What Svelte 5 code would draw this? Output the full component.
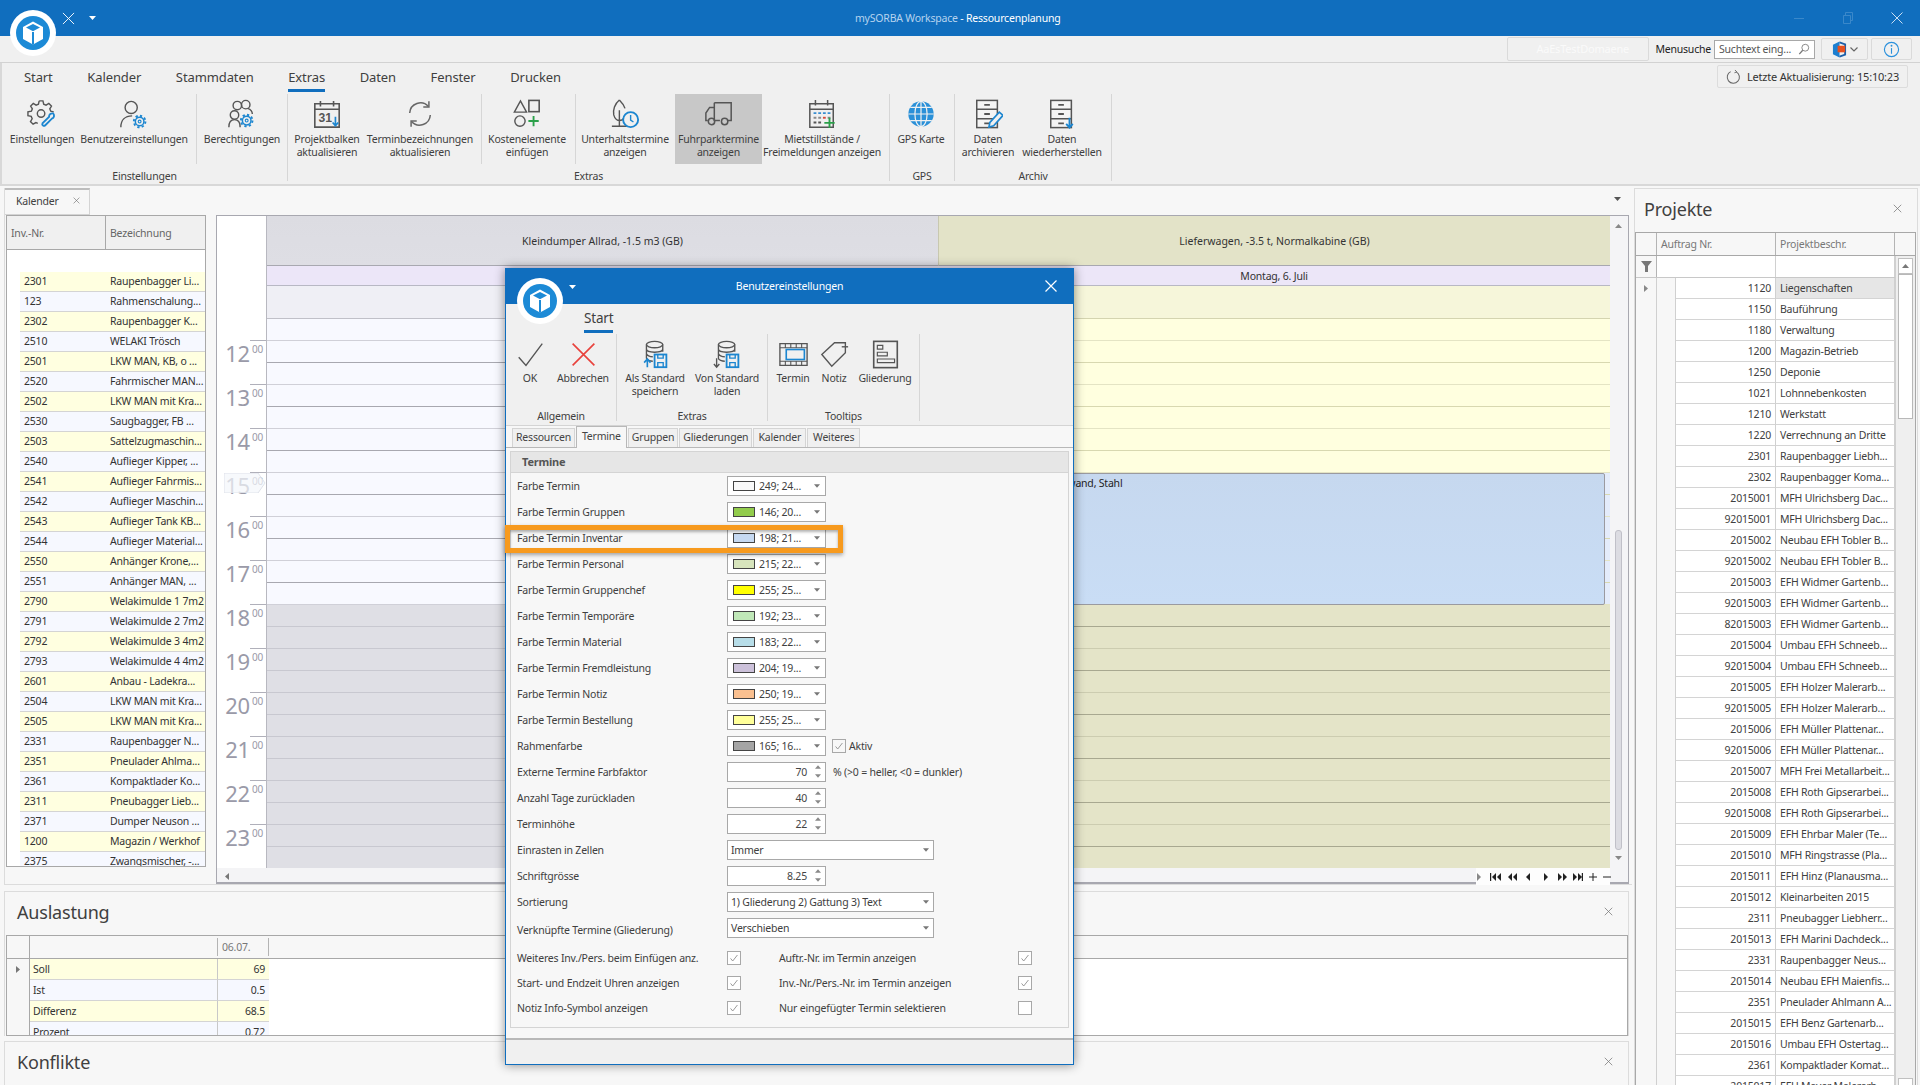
<script>
  const tabs = ["Start", "Kalender", "Stammdaten", "Extras", "Daten", "Fenster", "Drucken"];

  const invRows = [
    ["2301", "Raupenbagger Li..."], ["123", "Rahmenschalung..."], ["2302", "Raupenbagger K..."],
    ["2510", "WELAKI Trösch"], ["2501", "LKW MAN, KB, o ..."], ["2520", "Fahrmischer MAN..."],
    ["2502", "LKW MAN mit Kra..."], ["2530", "Saugbagger, FB ..."], ["2503", "Sattelzugmaschin..."],
    ["2540", "Auflieger Kipper, ..."], ["2541", "Auflieger Fahrmis..."], ["2542", "Auflieger Maschin..."],
    ["2543", "Auflieger Tank KB..."], ["2544", "Auflieger Material..."], ["2550", "Anhänger Krone,..."],
    ["2551", "Anhänger MAN, ..."], ["2790", "Welakimulde 1 7m2"], ["2791", "Welakimulde 2 7m2"],
    ["2792", "Welakimulde 3 4m2"], ["2793", "Welakimulde 4 4m2"], ["2601", "Anbau - Ladekra..."],
    ["2504", "LKW MAN mit Kra..."], ["2505", "LKW MAN mit Kra..."], ["2331", "Raupenbagger N..."],
    ["2351", "Pneulader Ahlma..."], ["2361", "Kompaktlader Ko..."], ["2311", "Pneubagger Lieb..."],
    ["2371", "Dumper Neuson ..."], ["1200", "Magazin / Werkhof"], ["2375", "Zwangsmischer, -..."]
  ];

  const projects = [
    ["1120", "Liegenschaften"], ["1150", "Bauführung"], ["1180", "Verwaltung"], ["1200", "Magazin-Betrieb"],
    ["1250", "Deponie"], ["1021", "Lohnnebenkosten"], ["1210", "Werkstatt"], ["1220", "Verrechnung an Dritte"],
    ["2301", "Raupenbagger Liebh..."], ["2302", "Raupenbagger Koma..."], ["2015001", "MFH Ulrichsberg Dac..."],
    ["92015001", "MFH Ulrichsberg Dac..."], ["2015002", "Neubau EFH Tobler B..."], ["92015002", "Neubau EFH Tobler B..."],
    ["2015003", "EFH Widmer Gartenb..."], ["92015003", "EFH Widmer Gartenb..."], ["82015003", "EFH Widmer Gartenb..."],
    ["2015004", "Umbau EFH Schneeb..."], ["92015004", "Umbau EFH Schneeb..."], ["2015005", "EFH Holzer Malerarb..."],
    ["92015005", "EFH Holzer Malerarb..."], ["2015006", "EFH Müller Plattenar..."], ["92015006", "EFH Müller Plattenar..."],
    ["2015007", "MFH Frei Metallarbeit..."], ["2015008", "EFH Roth Gipserarbei..."], ["92015008", "EFH Roth Gipserarbei..."],
    ["2015009", "EFH Ehrbar Maler (Te..."], ["2015010", "MFH Ringstrasse (Pla..."], ["2015011", "EFH Hinz (Planausma..."],
    ["2015012", "Kleinarbeiten 2015"], ["2311", "Pneubagger Liebherr..."], ["2015013", "EFH Marini Dachdeck..."],
    ["2331", "Raupenbagger Neus..."], ["2015014", "Neubau EFH Maienfis..."], ["2351", "Pneulader Ahlmann A..."],
    ["2015015", "EFH Benz Gartenarb..."], ["2015016", "Umbau EFH Ostertag..."], ["2361", "Kompaktlader Komat..."],
    ["2015017", "EFH Mayer Malerarb..."]
  ];

  const hours = [12, 13, 14, 15, 16, 17, 18, 19, 20, 21, 22, 23];
  // half hour slots from 11:30 to 24:00
  const slots = Array.from({ length: 25 }, (_, i) => i);

  const colorRows = [
    ["Farbe Termin", "#f9f9f9", "249; 24..."],
    ["Farbe Termin Gruppen", "#92cc4c", "146; 20..."],
    ["Farbe Termin Inventar", "#c6d9f1", "198; 21..."],
    ["Farbe Termin Personal", "#d7e4bc", "215; 22..."],
    ["Farbe Termin Gruppenchef", "#ffff00", "255; 25..."],
    ["Farbe Termin Temporäre", "#c0e8b8", "192; 23..."],
    ["Farbe Termin Material", "#b7dde8", "183; 22..."],
    ["Farbe Termin Fremdleistung", "#ccc1da", "204; 19..."],
    ["Farbe Termin Notiz", "#fac090", "250; 19..."],
    ["Farbe Termin Bestellung", "#ffff99", "255; 25..."],
    ["Rahmenfarbe", "#a5a5a5", "165; 16..."]
  ];
  const spinRows1 = [
    ["Externe Termine Farbfaktor", "70"],
    ["Anzahl Tage zurückladen", "40"],
    ["Terminhöhe", "22"]
  ];
  const checks = [
    ["Weiteres Inv./Pers. beim Einfügen anz.", true, "Auftr.-Nr. im Termin anzeigen", true],
    ["Start- und Endzeit Uhren anzeigen", true, "Inv.-Nr./Pers.-Nr. im Termin anzeigen", true],
    ["Notiz Info-Symbol anzeigen", true, "Nur eingefügter Termin selektieren", false]
  ];
  const dlgTabs = ["Ressourcen", "Termine", "Gruppen", "Gliederungen", "Kalender", "Weiteres"];
</script>

{#snippet logo(cls)}
  <svg class={cls} viewBox="0 0 46 46">
    <circle cx="23" cy="23" r="23" fill="#fff" />
    <circle cx="23" cy="23" r="17" fill="#1c8ad6" />
    <path d="M23 11.5 33 17v12l-10 5.5L13 29V17z" fill="#fff" />
    <path d="M23 14l7 3.6-7 3.7-7-3.7z" fill="#1c8ad6" />
    <path d="M23 22v12.5" stroke="#1c8ad6" stroke-width="2" />
  </svg>
{/snippet}

{#snippet blueGear(x, y)}
  <g fill="none" stroke="#1c86d0">
    <circle cx={x} cy={y} r="6.2" stroke-width="2" stroke-dasharray="2.4 2.4" />
    <circle cx={x} cy={y} r="4.6" stroke-width="1.6" />
    <circle cx={x} cy={y} r="1.5" stroke-width="1.2" />
  </g>
{/snippet}

{#snippet cabinet()}
  <g fill="none" stroke="#555" stroke-width="1.6">
    <rect x="4" y="1.5" width="22" height="29" fill="#f4f4f4" />
    <path d="M4 11h22M4 21h22" />
    <path d="M12 6.2h6M12 16h6M12 26h6" stroke-width="2" />
  </g>
{/snippet}

{#snippet dbSave()}
  <g fill="none" stroke="#555" stroke-width="1.5">
    <ellipse cx="15" cy="5" rx="9" ry="3.5" />
    <path d="M6 5v15c0 2 4 3.4 7 3.4M24 5v8M6 10c0 2 4 3.5 9 3.5s9-1.500 9-3.500M6 15c0 2 4 3.500 7 3.500" />
  </g>
  <g fill="none" stroke="#1c86d0" stroke-width="2">
    <rect x="15" y="16" width="13" height="14" />
    <path d="M18.500 16v4h6v-4M18.500 30v-5h6v5" stroke-width="1.500" />
  </g>
{/snippet}

{#snippet xIcon(cls)}
  <svg class={cls} viewBox="0 0 12 12"><path d="M1 1l10 10M11 1L1 11" stroke="currentColor" stroke-width="1" fill="none" /></svg>
{/snippet}

{#snippet caret()}
  <svg class="caret" viewBox="0 0 7 4"><path d="M0 0h7L3.500 4z" /></svg>
{/snippet}

{#snippet spinner()}
  <span class="spin"><svg viewBox="0 0 7 4"><path d="M0 4h7L3.500 0z" /></svg><svg viewBox="0 0 7 4"><path d="M0 0h7L3.500 4z" /></svg></span>
{/snippet}

{#snippet check(on)}
  <span class="check">
    {#if on}<svg viewBox="0 0 14 14"><path d="M3 7.500l2.500 3L11 3.500" fill="none" stroke="#8a8a8a" stroke-width="1" /></svg>{/if}
  </span>
{/snippet}

<div class="app">
  <header class="titlebar">
    <svg class="qa-x" viewBox="0 0 14 14"><path d="M1 1l12 12M13 1L1 13" stroke="#fff" stroke-width="1" fill="none" /></svg>
    <svg class="qa-drop" viewBox="0 0 7 4"><path d="M0 0h7L3.500 4z" fill="#fff" /></svg>
    <div class="title"><span class="dim">mySORBA Workspace</span> - <span>Ressourcenplanung</span></div>
    <div class="winbtns">
      <svg viewBox="0 0 12 12" class="wb"><path d="M1 6.500h10" stroke="#3a88ca" fill="none" /></svg>
      <svg viewBox="0 0 12 12" class="wb"><path d="M1.500 3.500h7v8h-7zM3.500 3.500v-3h7v8h-2" stroke="#3a88ca" fill="none" /></svg>
      <svg viewBox="0 0 12 12" class="wb"><path d="M.5.500l11 11M11.500.500l-11 11" stroke="#c9def2" fill="none" /></svg>
    </div>
  </header>
  {@render logo("app-logo")}

  <div class="topstrip">
    <div class="domain">AaEsTestDomaene</div>
    <span class="menusearch-label">Menusuche</span>
    <div class="search">
      <span>Suchtext eing...</span>
      <svg viewBox="0 0 14 14"><circle cx="8.500" cy="5.500" r="4" fill="none" stroke="#777" /><path d="M5.500 8.500L1.500 13" stroke="#777" stroke-width="1.500" /></svg>
    </div>
    <div class="stripbtn office">
      <svg viewBox="0 0 16 18"><path d="M1 4l7-3.500V17.500L1 14z" fill="#1c7fd0" /><path d="M8 1.500l6 2v11l-6 2" fill="none" stroke="#1c5fa8" stroke-width="2" /><rect x="6" y="5" width="8" height="7" fill="#e8501e" /></svg>
      <svg class="chev" viewBox="0 0 8 5"><path d="M.5.500L4 4 7.500.500" fill="none" stroke="#666" stroke-width="1.200" /></svg>
    </div>
    <div class="stripbtn info">
      <svg viewBox="0 0 18 18"><circle cx="9" cy="9" r="7.500" fill="none" stroke="#2a90dc" stroke-width="1.200" /><path d="M9 7.500v6" stroke="#2a90dc" stroke-width="1.200" /><circle cx="9" cy="5" r="1" fill="#2a90dc" /></svg>
    </div>
  </div>

  <section class="ribbon">
    <nav class="rtabs">
      {#each tabs as t}
        <span class="rtab" class:active={t === "Extras"}>{t}</span>
      {/each}
    </nav>
    <div class="lastupdate">
      <svg viewBox="0 0 16 16"><path d="M11 2.500A6.500 6.500 0 1 1 5 2.300" fill="none" stroke="#666" stroke-width="1.100" /><path d="M9.500.500l2 2-2.500 1" fill="none" stroke="#666" stroke-width="1" /></svg>
      Letzte Aktualisierung: 15:10:23
    </div>
    <div class="groups">
      <div class="group" style="width:286px">
        <div class="items">
          <div class="item" style="width:74px;margin-left:3px">
            <svg viewBox="0 0 32 32">
              <path d="M13 2h4l.8 3.500 2.500 1 3-1.800 2.800 2.800-1.800 3 1 2.500 3.200.8" fill="none" stroke="#555" stroke-width="1.500" />
              <path d="M13 2l-.8 3.500-2.500 1-3-1.800-2.800 2.800 1.800 3-1 2.500L1 13.800v4l3.500.8 1 2.500-1.800 3 2.800 2.800 3-1.800 2 .8" fill="none" stroke="#555" stroke-width="1.500" />
              <circle cx="15" cy="15.500" r="4" fill="none" stroke="#555" stroke-width="1.500" />
              <path d="M28 15.500c1.500 2 1 4.500-1.500 5.500l-7 7c-1.500 1.500-4 0-3-2l7-7c0-2.500 2-4 4.500-3.500z" fill="none" stroke="#1c86d0" stroke-width="2" />
            </svg>
            <span>Einstellungen</span>
          </div>
          <div class="item" style="width:110px">
            <svg viewBox="0 0 32 32">
              <circle cx="13" cy="9" r="6.500" fill="none" stroke="#555" stroke-width="1.500" />
              <path d="M2 30c0-7 4-12 12-12" fill="none" stroke="#555" stroke-width="1.500" />
              {@render blueGear(22, 24)}
            </svg>
            <span>Benutzereinstellungen</span>
          </div>
          <i class="sep" style="margin-left:7px"></i>
          <div class="item" style="width:90px">
            <svg viewBox="0 0 32 32">
              <circle cx="11" cy="7" r="4.500" fill="none" stroke="#555" stroke-width="1.500" />
              <circle cx="20" cy="6" r="4.500" fill="none" stroke="#555" stroke-width="1.500" />
              <circle cx="8" cy="17" r="4.500" fill="none" stroke="#555" stroke-width="1.500" />
              <path d="M2 30c0-5 2-8 6-8s6 3 6 8M22 10c3 1 5 3 5 6" fill="none" stroke="#555" stroke-width="1.500" />
              {@render blueGear(21, 23)}
            </svg>
            <span>Berechtigungen</span>
          </div>
        </div>
        <div class="glabel">Einstellungen</div>
      </div>

      <div class="group" style="width:602px">
        <div class="items">
          <div class="item" style="width:78px">
            <svg viewBox="0 0 32 32">
              <path d="M3 5h26v25H3zM3 11h26M9 2v6M23 2v6" fill="none" stroke="#555" stroke-width="1.700" />
              <text x="7" y="25" font-size="13" font-weight="700" fill="#555" font-family="Liberation Sans">31</text>
              <path d="M25 19v9M22 25l3 3.500 3-3.500" fill="none" stroke="#1c86d0" stroke-width="1.800" />
            </svg>
            <span>Projektbalken<br />aktualisieren</span>
          </div>
          <div class="item" style="width:108px">
            <svg viewBox="0 0 32 32">
              <path d="M5 15a11.500 11.500 0 0 1 20-7M27 17a11.500 11.500 0 0 1-20 7" fill="none" stroke="#666" stroke-width="1.600" />
              <path d="M25.500 2.500v6h-6M6.500 29.500v-6h6" fill="none" stroke="#666" stroke-width="1.600" />
            </svg>
            <span>Terminbezeichnungen<br />aktualisieren</span>
          </div>
          <i class="sep" style="margin-left:7px"></i>
          <div class="item" style="width:90px">
            <svg viewBox="0 0 32 32">
              <path d="M9 2l6.500 12h-13z" fill="none" stroke="#555" stroke-width="1.500" />
              <rect x="18" y="1.500" width="11" height="12" fill="none" stroke="#555" stroke-width="1.700" />
              <circle cx="8.500" cy="23.500" r="5.500" fill="none" stroke="#555" stroke-width="1.500" />
              <path d="M23 18v11M17.500 23.500h11" stroke="#2ba04a" stroke-width="2" />
            </svg>
            <span>Kostenelemente<br />einfügen</span>
          </div>
          <i class="sep" style="margin-left:3px"></i>
          <div class="item" style="width:98px;margin-right:1px">
            <svg viewBox="0 0 32 32">
              <path d="M10 1C5 5 3 12 4 17c1 4 4 6 6 6s4-1 5-3M10 1c3 3 5 6 6 9M10 12v17M2 29h16" fill="none" stroke="#555" stroke-width="1.500" />
              <circle cx="22" cy="22" r="8" fill="#f0f0f0" stroke="#1c86d0" stroke-width="2" />
              <path d="M22 17v5.500l3 2" fill="none" stroke="#1c86d0" stroke-width="1.500" />
            </svg>
            <span>Unterhaltstermine<br />anzeigen</span>
          </div>
          <div class="item selected" style="width:87px">
            <svg viewBox="0 0 32 32">
              <path d="M11 4h18v19H25M17 23H11V4M11 9H6L2 15v8h2M12 23h1" fill="none" stroke="#555" stroke-width="1.600" />
              <circle cx="8" cy="24" r="3.400" fill="none" stroke="#555" stroke-width="1.600" />
              <circle cx="22" cy="24" r="3.400" fill="none" stroke="#555" stroke-width="1.600" />
            </svg>
            <span>Fuhrparktermine<br />anzeigen</span>
          </div>
          <div class="item" style="width:118px;margin-left:1px">
            <svg viewBox="0 0 32 32">
              <path d="M3 5h25v25H3zM3 11h25M9 1v6M22 1v6" fill="none" stroke="#555" stroke-width="1.600" />
              <path d="M7 15h3M12 15h3M17 15h3M22 15h3" stroke="#3a8ed0" stroke-width="2" />
              <path d="M7 20h3M12 20h3M22 20h3" stroke="#8a8a8a" stroke-width="2" /><path d="M17 20h3" stroke="#d84a3a" stroke-width="2" />
              <path d="M7 25h3M12 25h3" stroke="#555" stroke-width="2" />
              <path d="M24 20v11M18.500 25.500h11" stroke="#2ba04a" stroke-width="2" />
            </svg>
            <span>Mietstillstände /<br />Freimeldungen anzeigen</span>
          </div>
        </div>
        <div class="glabel">Extras</div>
      </div>

      <div class="group" style="width:65px">
        <div class="items">
          <div class="item" style="width:62px">
            <svg viewBox="0 0 32 32">
              <circle cx="16" cy="16" r="13.500" fill="#2a90d8" />
              <path d="M16 2.500v27M2.500 16h27M4.500 9h23M4.500 23h23" stroke="#f0f0f0" stroke-width="1.300" fill="none" />
              <ellipse cx="16" cy="16" rx="6.500" ry="13.500" stroke="#f0f0f0" stroke-width="1.300" fill="none" />
            </svg>
            <span>GPS Karte</span>
          </div>
        </div>
        <div class="glabel">GPS</div>
      </div>

      <div class="group" style="width:157px">
        <div class="items">
          <div class="item" style="width:66px">
            <svg viewBox="0 0 32 32">
              {@render cabinet()}
              <path d="M17 30l1-5 10-11 4 3.500-10 11z" fill="#f0f0f0" stroke="#1c86d0" stroke-width="1.800" />
            </svg>
            <span>Daten<br />archivieren</span>
          </div>
          <div class="item" style="width:82px">
            <svg viewBox="0 0 32 32">
              {@render cabinet()}
              <path d="M24 20v10M20.500 26.500l3.500 4 3.500-4" fill="none" stroke="#1c86d0" stroke-width="2" />
            </svg>
            <span>Daten<br />wiederherstellen</span>
          </div>
        </div>
        <div class="glabel">Archiv</div>
      </div>
    </div>
  </section>

  <main class="main">
    <div class="leftside">
      <section class="doc">
        <div class="doctabs">
          <div class="doctab">Kalender {@render xIcon("tabx")}</div>
          <svg class="docdrop" viewBox="0 0 7 4"><path d="M0 0h7L3.500 4z" fill="#555" /></svg>
        </div>
        <div class="docbody">
          <div class="invgrid">
            <div class="invhead"><span>Inv.-Nr.</span><span>Bezeichnung</span></div>
            <div class="invfilter"></div>
            <div class="invrows">
              {#each invRows as r, i}
                <div class="invrow" class:odd={i % 2 === 0}><span>{r[0]}</span><span>{r[1]}</span></div>
              {/each}
            </div>
          </div>

          <div class="cal">
            <div class="cal-main">
              <div class="times">
                <div class="times-top"></div>
                {#each hours as h}
                  <div class="hour"><b>{h}</b><sup>00</sup></div>
                {/each}
                <svg class="nowmark" viewBox="0 0 42 20"><path d="M0 0h34l7 10-7 10H0z" fill="#f4f6fb" fill-opacity=".7" stroke="#dfe2ea" /></svg>
              </div>
              <div class="col col-a">
                <div class="colhead">Kleindumper Allrad, -1.5 m3 (GB)</div>
                <div class="coldate"></div>
                <div class="colgap"></div>
                {#each slots as s}
                  <div class="slot" class:hr={s % 2 === 0} class:off={s >= 13}></div>
                {/each}
              </div>
              <div class="col col-b">
                <div class="colhead">Lieferwagen, -3.5 t, Normalkabine (GB)</div>
                <div class="coldate">Montag, 6. Juli</div>
                <div class="colgap"></div>
                {#each slots as s}
                  <div class="slot" class:hr={s % 2 === 0} class:off={s >= 13} class:under={s >= 7 && s < 13}></div>
                {/each}
                <div class="event">Trennwand, Stahl</div>
              </div>
              <div class="vscroll">
                <svg class="arr up" viewBox="0 0 7 4"><path d="M0 4h7L3.500 0z" /></svg>
                <div class="vthumb"></div>
                <svg class="arr down" viewBox="0 0 7 4"><path d="M0 0h7L3.500 4z" /></svg>
              </div>
            </div>
            <div class="hscroll">
              <svg class="hleft" viewBox="0 0 4 7"><path d="M4 0v7L0 3.500z" /></svg>
              <div class="navbtns">
                <svg viewBox="0 0 134 12">
                  <g fill="#888"><path d="M1 2l4 4-4 4z" /></g>
                  <g fill="#222">
                    <path d="M14 2v8h1.200V2zM20 2l-4 4 4 4zM25 2l-4 4 4 4z" />
                    <path d="M36 2l-4 4 4 4zM41 2l-4 4 4 4z" />
                    <path d="M54 2l-4 4 4 4z" />
                    <path d="M68 2l4 4-4 4z" />
                    <path d="M82 2l4 4-4 4zM87 2l4 4-4 4z" />
                    <path d="M97 2l4 4-4 4zM102 2l4 4-4 4zM107 2v8h-1.200V2z" />
                    <path d="M113 6h8M117 2v8" stroke="#222" stroke-width="1" />
                    <path d="M127 6h8" stroke="#222" stroke-width="1" />
                  </g>
                </svg>
              </div>
            </div>
          </div>
        </div>
      </section>

      <section class="panel ausl">
        <div class="panelhead"><h2>Auslastung</h2>{@render xIcon("panelx")}</div>
        <div class="ltable">
          <div class="lhead"><i class="lind"></i><i class="lname"></i><span class="lval">06.07.</span></div>
          <div class="lrow odd"><i class="lind"><svg viewBox="0 0 4 7"><path d="M0 0v7l4-3.500z" fill="#777" /></svg></i><span class="lname">Soll</span><span class="lval">69</span></div>
          <div class="lrow"><i class="lind"></i><span class="lname">Ist</span><span class="lval">0.5</span></div>
          <div class="lrow odd"><i class="lind"></i><span class="lname">Differenz</span><span class="lval">68.5</span></div>
          <div class="lrow"><i class="lind"></i><span class="lname">Prozent</span><span class="lval">0.72</span></div>
        </div>
      </section>

      <section class="panel konf">
        <div class="panelhead"><h2>Konflikte</h2>{@render xIcon("panelx")}</div>
      </section>
    </div>

    <aside class="projects">
      <div class="panelhead phead"><h2>Projekte</h2>{@render xIcon("panelx")}</div>
      <div class="ptable">
        <div class="pcols"><i class="pi"></i><span class="pnum">Auftrag Nr.</span><span class="pdesc">Projektbeschr.</span></div>
        <div class="pfilter">
          <i class="pi"><svg viewBox="0 0 11 11"><path d="M0 0h11L7 5v6H4V5z" fill="#777" /></svg></i>
          <span class="pnum"></span><span class="pdesc"></span>
        </div>
        <div class="prows">
          {#each projects as p, i}
            <div class="prow">
              <i class="pi">{#if i === 0}<svg viewBox="0 0 4 7"><path d="M0 0v7l4-3.500z" fill="#888" /></svg>{/if}</i>
              <i class="pind"></i>
              <span class="pn">{p[0]}</span>
              <span class="pd" class:sel={i === 0}>{p[1]}</span>
            </div>
          {/each}
        </div>
        <div class="pscroll">
          <div class="pbtn"><svg viewBox="0 0 7 4"><path d="M0 4h7L3.500 0z" fill="#777" /></svg></div>
          <div class="pthumb"></div>
          <div class="pbtn pbtn-end"></div>
        </div>
      </div>
    </aside>
  </main>

  <!-- modal window -->
  <div class="dialog">
    <div class="dlg-title">
      <svg class="dlg-drop" viewBox="0 0 7 4"><path d="M0 0h7L3.500 4z" fill="#fff" /></svg>
      <span>Benutzereinstellungen</span>
      <svg class="dlg-close" viewBox="0 0 12 12"><path d="M.5.500l11 11M11.500.500l-11 11" stroke="#fff" stroke-width="1.200" fill="none" /></svg>
    </div>
    {@render logo("dlg-logo")}
    <div class="dlg-ribbon">
      <div class="dlg-tabrow"><span class="dlg-tab">Start</span></div>
      <div class="dlg-groups">
        <div class="dgroup" style="width:111px">
          <div class="ditems">
            <div class="ditem" style="width:46px;margin-left:1px">
              <svg viewBox="0 0 32 32"><path d="M3 19l8 9L29 4" fill="none" stroke="#555" stroke-width="1.500" /></svg>
              <span>OK</span>
            </div>
            <div class="ditem" style="width:60px">
              <svg viewBox="0 0 32 32"><path d="M4 4l24 24M28 4L4 28" fill="none" stroke="#e8423c" stroke-width="1.800" /></svg>
              <span>Abbrechen</span>
            </div>
          </div>
          <div class="glabel">Allgemein</div>
        </div>
        <div class="dgroup" style="width:151px">
          <div class="ditems">
            <div class="ditem" style="width:72px;margin-left:2px">
              <svg viewBox="0 0 32 32">
                {@render dbSave()}
                <path d="M7 30v-8M3.500 25l3.500-4 3.500 4" fill="none" stroke="#1c86d0" stroke-width="1.800" />
              </svg>
              <span>Als Standard<br />speichern</span>
            </div>
            <div class="ditem" style="width:72px">
              <svg viewBox="0 0 32 32">
                {@render dbSave()}
                <path d="M4 20v10M1 26.500l3 3.500 3-3.500" fill="none" stroke="#555" stroke-width="1.500" />
              </svg>
              <span>Von Standard<br />laden</span>
            </div>
          </div>
          <div class="glabel">Extras</div>
        </div>
        <div class="dgroup" style="width:152px">
          <div class="ditems">
            <div class="ditem" style="width:44px;margin-left:3px">
              <svg viewBox="0 0 32 32">
                <path d="M1 4h30v24H1z" fill="none" stroke="#555" stroke-width="1.500" />
                <path d="M1 8.500h30M1 23.500h30M7 4v4.500M13 4v4.500M19 4v4.500M25 4v4.500M7 23.500V28M13 23.500V28M19 23.500V28M25 23.500V28" stroke="#555" stroke-width="1.200" fill="none" />
                <rect x="8" y="10.500" width="20" height="11" fill="none" stroke="#1c86d0" stroke-width="1.800" />
              </svg>
              <span>Termin</span>
            </div>
            <div class="ditem" style="width:38px">
              <svg viewBox="0 0 32 32">
                <path d="M2 16L16 3h12v11L13 29z" fill="none" stroke="#555" stroke-width="1.500" />
                <path d="M24 7.500h7" stroke="#555" stroke-width="1.500" />
              </svg>
              <span>Notiz</span>
            </div>
            <div class="ditem" style="width:64px">
              <svg viewBox="0 0 32 32">
                <rect x="3" y="1.500" width="26" height="29" fill="none" stroke="#555" stroke-width="1.800" />
                <path d="M7 6h6v4H7zM7 13.500h11v4H7zM7 21h19v4H7z" fill="none" stroke="#555" stroke-width="1.300" />
              </svg>
              <span>Gliederung</span>
            </div>
          </div>
          <div class="glabel">Tooltips</div>
        </div>
      </div>
    </div>

    <div class="dlg-content">
      <div class="dlg-tabs">
        {#each dlgTabs as t}
          <span class="dtab" class:on={t === "Termine"}>{t}</span>
        {/each}
      </div>
      <div class="dlg-box">
        <div class="box-head">Termine</div>
        <div class="form">
          {#each colorRows as r}
            <div class="frow">
              <label>{r[0]}</label>
              <div class="field color">
                <i class="swatch" style="background:{r[1]}"></i>
                <span>{r[2]}</span>
                {@render caret()}
              </div>
              {#if r[0] === "Rahmenfarbe"}
                {@render check(true)}<span class="after">Aktiv</span>
              {/if}
            </div>
          {/each}
          {#each spinRows1 as r, i}
            <div class="frow">
              <label>{r[0]}</label>
              <div class="field num"><span>{r[1]}</span>{@render spinner()}</div>
              {#if i === 0}<span class="after pct">% (&gt;0 = heller, &lt;0 = dunkler)</span>{/if}
            </div>
          {/each}
          <div class="frow">
            <label>Einrasten in Zellen</label>
            <div class="field wide"><span>Immer</span>{@render caret()}</div>
          </div>
          <div class="frow">
            <label>Schriftgrösse</label>
            <div class="field num"><span>8.25</span>{@render spinner()}</div>
          </div>
          <div class="frow">
            <label>Sortierung</label>
            <div class="field wide"><span>1) Gliederung 2) Gattung 3) Text</span>{@render caret()}</div>
          </div>
          <div class="frow">
            <label class="low">Verknüpfte Termine (Gliederung)</label>
            <div class="field wide"><span>Verschieben</span>{@render caret()}</div>
          </div>
        </div>
        <div class="checks">
          {#each checks as c}
            <div class="crow">
              <label>{c[0]}</label>
              {@render check(c[1])}
              <label class="second">{c[2]}</label>
              {@render check(c[3])}
            </div>
          {/each}
        </div>
      </div>
    </div>
    <div class="dlg-foot"></div>
  </div>

  <div class="highlight"></div>
</div>

<style>
  :global(body) {
    margin: 0;
    background: #f7f7f7;
  }

  .app {
    position: relative;
    width: 1920px;
    height: 1085px;
    overflow: hidden;
    display: flex;
    flex-direction: column;
    font-family: "Noto Sans", "Liberation Sans", sans-serif;
    font-size: 10.5px;
    letter-spacing: -.2px;
    color: #404040;
  }

  /* title bar */
  .titlebar {
    position: relative;
    height: 36px;
    flex: none;
    background: #106ebe;
    display: flex;
    align-items: center;
    padding-left: 62px;
    color: #fff;
  }
  .qa-x { width: 13px; height: 13px; }
  .qa-drop { width: 7px; height: 4px; margin-left: 14px; }
  .title {
    position: absolute;
    left: 855px;
    top: 11px;
    font-size: 10.5px;
    white-space: nowrap;
  }
  .dim { color: #b6d3ee; }
  .winbtns {
    position: absolute;
    right: 17px;
    top: 12px;
    display: flex;
    gap: 37px;
  }
  .wb { width: 12px; height: 12px; }
  :global(.app-logo) {
    position: absolute;
    left: 10px;
    top: 10px;
    width: 46px;
    height: 46px;
    z-index: 3;
  }

  .topstrip {
    height: 26px;
    flex: none;
    background: #f0f0f0;
    border-bottom: 1px solid #d2d2d2;
    display: flex;
    align-items: center;
    justify-content: flex-end;
    padding-right: 8px;
    box-sizing: content-box;
  }
  .domain {
    width: 140px;
    height: 22px;
    border: 1px solid #dadada;
    border-radius: 2px;
    color: #fafafa;
    font-size: 11px;
    line-height: 22px;
    text-indent: 28px;
    margin-right: 6px;
    white-space: nowrap;
    overflow: hidden;
  }
  .menusearch-label { margin-right: 3px; color: #222; }
  .search {
    height: 19px;
    width: 101px;
    background: #fff;
    border: 1px solid #a8a8a8;
    display: flex;
    align-items: center;
    justify-content: space-between;
    padding: 0 4px;
    box-sizing: border-box;
    color: #555;
    margin-right: 6px;
  }
  .search svg { width: 12px; height: 12px; }
  .stripbtn {
    height: 22px;
    border: 1px solid #dadada;
    border-radius: 2px;
    display: flex;
    align-items: center;
    justify-content: center;
    box-sizing: border-box;
  }
  .office { width: 47px; gap: 3px; margin-right: 3px; }
  .office svg:first-child { width: 15px; height: 17px; }
  .chev { width: 8px; height: 5px; }
  .info { width: 41px; }
  .info svg { width: 17px; height: 17px; }

  /* main ribbon */
  .ribbon {
    position: relative;
    height: 121px;
    flex: none;
    background: #f0f0f0;
    border-bottom: 2px solid #d8d8d8;
    border-left: 2px solid #d8d8d8;
    box-sizing: content-box;
  }
  .rtabs {
    display: flex;
    gap: 34.6px;
    padding: 4px 0 0 22px;
    height: 25px;
    box-sizing: border-box;
  }
  .rtab {
    font-size: 13px;
    line-height: 20px;
    height: 22px;
    color: #404040;
    letter-spacing: -.1px;
  }
  .rtab.active { border-bottom: 3px solid #106ebe; }
  .lastupdate {
    position: absolute;
    right: 12px;
    top: 2px;
    width: 191px;
    height: 23px;
    border: 1px solid #dcdcdc;
    border-radius: 2px;
    display: flex;
    align-items: center;
    justify-content: center;
    gap: 6px;
    font-size: 11px;
    color: #333;
    box-sizing: border-box;
  }
  .lastupdate svg { width: 15px; height: 16px; }
  .groups {
    display: flex;
    margin-top: 6px;
  }
  .group {
    height: 87px;
    border-right: 1px solid #d6d6d6;
    box-sizing: border-box;
    display: flex;
    flex-direction: column;
  }
  .items {
    display: flex;
    height: 70px;
    flex: none;
  }
  .item {
    flex: none;
    display: flex;
    flex-direction: column;
    align-items: center;
    text-align: center;
    padding-top: 5px;
    box-sizing: border-box;
    line-height: 13px;
    white-space: nowrap;
  }
  .item svg {
    width: 30px;
    height: 30px;
    margin-bottom: 4px;
  }
  .item.selected { background: #c8c8c8; }
  .sep {
    flex: none;
    width: 1px;
    height: 70px;
    background: #d6d6d6;
    display: block;
  }
  .glabel {
    text-align: center;
    line-height: 13px;
    height: 13px;
    flex: none;
    margin-top: 6px;
    white-space: nowrap;
  }
  .dgroup .glabel { margin-top: 4px; }

  /* main area */
  .main {
    flex: 1;
    min-height: 0;
    display: flex;
    background: #f7f7f7;
  }
  .leftside {
    width: 1632px;
    flex: none;
    padding: 2px 0 0 4px;
    box-sizing: border-box;
    display: flex;
    flex-direction: column;
    gap: 5px;
  }
  .doc {
    height: 697px;
    flex: none;
    display: flex;
    flex-direction: column;
    border-left: 1px solid #dcdcdc;
    border-bottom: 1px solid #dcdcdc;
    box-sizing: border-box;
  }
  .doctabs {
    height: 27px;
    flex: none;
    position: relative;
  }
  .doctab {
    width: 85px;
    height: 27px;
    box-sizing: border-box;
    background: #f7f7f7;
    border: 1px solid #d4d4d4;
    border-top: 2px solid #bdbdbd;
    border-left: 0;
    display: flex;
    align-items: center;
    padding: 0 0 3px 11px;
    font-size: 10.5px;
    gap: 14px;
  }
  :global(.tabx) { width: 7px; height: 7px; color: #666; }
  .docdrop {
    position: absolute;
    right: 11px;
    top: 9px;
    width: 7px;
    height: 4px;
  }
  .docbody {
    flex: 1;
    min-height: 0;
    display: flex;
  }
  .invgrid {
    width: 200px;
    flex: none;
    margin-left: 1px;
    height: 652px;
    border: 1px solid #a8a8a8;
    box-sizing: border-box;
    overflow: hidden;
    background: #fff;
  }
  .invhead {
    display: flex;
    height: 34px;
    background: #f0f0f0;
    border-bottom: 1px solid #a8a8a8;
    color: #666;
    line-height: 34px;
    box-sizing: border-box;
  }
  .invhead span:first-child {
    width: 99px;
    padding-left: 4px;
    box-sizing: border-box;
    border-right: 1px solid #a8a8a8;
  }
  .invhead span:last-child { padding-left: 4px; }
  .invfilter { height: 22px; }
  .invrow {
    display: flex;
    height: 20px;
    margin-left: 13px;
    background: #f6f8ff;
    border-bottom: 1px solid #d4d4d4;
    box-sizing: border-box;
    line-height: 19px;
    white-space: nowrap;
    color: #333;
  }
  .invrow.odd { background: #ffffe0; }
  .invrow span:first-child { width: 90px; padding-left: 4px; box-sizing: border-box; flex: none; }

  .cal {
    margin-left: 10px;
    width: 1413px;
    flex: none;
    height: 669px;
    border: 1px solid #a8a8b0;
    border-bottom: 2px solid #a8a8b0;
    box-sizing: border-box;
    display: flex;
    flex-direction: column;
  }
  .cal-main {
    height: 652px;
    flex: none;
    display: flex;
    overflow: hidden;
  }
  .times {
    width: 49px;
    flex: none;
    background: #fff;
    position: relative;
  }
  .times-top { height: 124px; }
  .hour {
    height: 44px;
    box-sizing: border-box;
    position: relative;
    color: #9a9aa8;
    text-align: right;
    padding-right: 3px;
    white-space: nowrap;
  }
  .hour::before {
    content: "";
    position: absolute;
    right: 0;
    top: 0;
    width: 16px;
    height: 1px;
    background: #b0b0ba;
  }
  .hour b {
    font-weight: 400;
    font-size: 22px;
    line-height: 24px;
    position: absolute;
    right: 16px;
    top: 1px;
  }
  .hour sup {
    font-size: 10px;
    line-height: 12px;
    position: absolute;
    right: 3px;
    top: 3px;
    vertical-align: baseline;
  }
  .nowmark {
    position: absolute;
    left: 7px;
    top: 257px;
    width: 42px;
    height: 20px;
  }
  .col {
    flex: none;
    position: relative;
    box-sizing: border-box;
  }
  .col-a { width: 672px; border-left: 1px solid #b8b8c0; }
  .col-b { width: 672px; }
  .colhead {
    height: 50px;
    line-height: 50px;
    text-align: center;
    border-bottom: 1px solid #a8a8b0;
    box-sizing: border-box;
    color: #333;
    letter-spacing: 0;
  }
  .col-a .colhead { background: linear-gradient(#dcdce2, #dedee4); }
  .col-b .colhead { background: #e3e3c8; border-left: 1px solid #c8c8b0; }
  .coldate {
    height: 20px;
    line-height: 20px;
    background: #ece6f8;
    text-align: center;
    border-bottom: 1px solid #b8b8c4;
    box-sizing: border-box;
    color: #333;
  }
  .colgap { height: 33px; border-bottom: 1px solid #c0c0c8; box-sizing: border-box; }
  .col-a .colgap { background: #efeff5; }
  .col-b .colgap { background: #f6f6da; border-bottom-color: #d4d4b0; }
  .slot {
    height: 22px;
    box-sizing: border-box;
    border-bottom: 1px solid #a8a8b0;
  }
  .slot.hr { border-bottom-color: #d0d0d8; }
  .col-a .slot { background: #f8f9ff; }
  .col-a .slot.off { background: #dfdfe5; border-bottom-color: #c8c8d0; }
  .col-b .slot { background: #ffffdf; border-bottom-color: #d8d8b0; }
  .col-b .slot.hr { border-bottom-color: #e4e4c4; }
  .col-b .slot.under { background: #e4ecfb; }
  .col-b .slot.off { background: #e4e4c8; border-bottom-color: #a8a890; }
  .col-b .slot.off.hr { border-bottom-color: #ccccb0; }
  .event {
    position: absolute;
    left: 0;
    right: 5px;
    top: 257px;
    height: 132px;
    box-sizing: border-box;
    background: linear-gradient(#c6d8ef, #c9ddf5);
    border: 1px solid #9a9aa0;
    border-radius: 2px;
    padding: 2px 0 0 101px;
    color: #222;
    z-index: 1;
  }
  .vscroll {
    flex: 1;
    background: #f4f4f6;
    position: relative;
  }
  .arr { position: absolute; left: 5px; width: 7px; height: 4px; fill: #888; }
  .arr.up { top: 8px; }
  .arr.down { bottom: 8px; }
  .vthumb {
    position: absolute;
    left: 5px;
    top: 314px;
    width: 7px;
    height: 320px;
    background: #dcdce2;
    border: 1px solid #c0c0c8;
    border-radius: 3px;
    box-sizing: border-box;
  }
  .hscroll {
    flex: 1;
    background: #f4f4f6;
    position: relative;
  }
  .hleft { position: absolute; left: 8px; top: 5px; width: 4px; height: 7px; fill: #777; }
  .navbtns {
    position: absolute;
    right: 18px;
    top: 0;
    width: 134px;
    height: 17px;
    background: #fdfdfd;
    display: flex;
    align-items: center;
  }
  .navbtns svg { width: 134px; height: 12px; overflow: visible; }

  /* docked panels */
  .panel {
    background: #f7f7f7;
    border: 1px solid #dcdcdc;
    width: 1625px;
    box-sizing: border-box;
  }
  .ausl { height: 145px; flex: none; margin-top: 1px; border-bottom: 0; }
  .konf { flex: 1; }
  .panelhead {
    height: 43px;
    display: flex;
    align-items: center;
    justify-content: space-between;
    padding: 0 15px 4px 12px;
    box-sizing: border-box;
  }
  h2 {
    margin: 0;
    font-size: 18px;
    font-weight: 400;
    color: #404040;
  }
  :global(.panelx) { width: 9px; height: 9px; color: #777; }
  .ltable {
    height: 101px;
    margin: 0 0 0 1px;
    border: 1px solid #a8a8a8;
    background: #fff;
    overflow: hidden;
    box-sizing: border-box;
  }
  .lhead {
    display: flex;
    height: 23px;
    background: #f7f7f7;
    border-bottom: 1px solid #a8a8a8;
    box-sizing: border-box;
    color: #777;
    line-height: 22px;
    white-space: nowrap;
  }
  .lrow {
    display: flex;
    height: 21px;
    line-height: 20px;
    white-space: nowrap;
    color: #333;
  }
  .lind {
    width: 23px;
    flex: none;
    box-sizing: border-box;
    background: #f7f7f7;
    border-right: 1px solid #a8a8a8;
    display: flex;
    align-items: center;
    justify-content: center;
  }
  .lind svg { width: 4px; height: 7px; }
  .lname {
    width: 188px;
    flex: none;
    box-sizing: border-box;
    padding-left: 3px;
    background: #f6f8ff;
    border-right: 1px solid #c8c8c8;
    border-bottom: 1px solid #d4d4d4;
  }
  .lhead .lname { background: none; border: 0; border-right: 1px solid #b4b4b4; margin: 2px 0; }
  .lval {
    width: 51px;
    flex: none;
    box-sizing: border-box;
    padding-right: 4px;
    text-align: right;
    background: #f6f8ff;
    border-bottom: 1px solid #d4d4d4;
  }
  .lhead .lval { background: none; border: 0; border-right: 1px solid #b4b4b4; text-align: left; padding-left: 4px; margin: 2px 0; line-height: 18px; }
  .lrow.odd .lname, .lrow.odd .lval { background: #ffffe0; }

  .projects {
    width: 284px;
    flex: none;
    margin: 2px 0 0 2px;
    border: 1px solid #dcdcdc;
    box-sizing: border-box;
    background: #f7f7f7;
    display: flex;
    flex-direction: column;
    height: 899px;
  }
  .phead { padding: 0 15px 4px 9px; }
  .ptable {
    flex: 1;
    min-height: 0;
    position: relative;
    border: 1px solid #a8a8a8;
    border-bottom: 0;
    overflow: hidden;
    background: #fff;
    margin-right: 1px;
  }
  .pcols {
    display: flex;
    height: 23px;
    background: #f7f7f7;
    border-bottom: 1px solid #a8a8a8;
    box-sizing: border-box;
    line-height: 22px;
    color: #777;
  }
  .pi {
    width: 21px;
    flex: none;
    display: flex;
    align-items: center;
    justify-content: center;
    background: #f7f7f7;
    border-right: 1px solid #b4b4b4;
    box-sizing: border-box;
  }
  .pi svg { width: 4px; height: 7px; }
  .pfilter .pi svg { width: 11px; height: 11px; }
  .pnum {
    width: 119px;
    flex: none;
    padding-left: 4px;
    box-sizing: border-box;
    border-right: 1px solid #b4b4b4;
  }
  .pdesc {
    width: 119px;
    flex: none;
    padding-left: 4px;
    box-sizing: border-box;
    border-right: 1px solid #b4b4b4;
  }
  .pfilter {
    display: flex;
    height: 22px;
    border-bottom: 1px solid #c8c8c8;
    box-sizing: border-box;
    background: #fff;
  }
  .pfilter .pnum, .pfilter .pdesc { border-color: #d0d0d0; }
  .prow {
    display: flex;
    height: 21px;
    line-height: 20px;
    white-space: nowrap;
    color: #404040;
  }
  .prow .pi { border-right: 1px solid #d0d0d0; }
  .pind {
    width: 19px;
    flex: none;
    background: #f7f7f7;
    border-right: 1px solid #d0d0d0;
    box-sizing: border-box;
  }
  .pn {
    width: 100px;
    flex: none;
    text-align: right;
    padding-right: 4px;
    box-sizing: border-box;
    border-right: 1px solid #d0d0d0;
    border-bottom: 1px solid #d4d4d4;
    background: #fff;
  }
  .pd {
    width: 119px;
    flex: none;
    padding-left: 4px;
    box-sizing: border-box;
    border-right: 1px solid #d0d0d0;
    border-bottom: 1px solid #d4d4d4;
    background: #fff;
    overflow: hidden;
  }
  .pd.sel { background: #e6e6e6; }
  .pscroll {
    position: absolute;
    right: 0;
    top: 23px;
    bottom: 0;
    width: 20px;
    background: #efefef;
    border-left: 1px solid #d0d0d0;
    box-sizing: border-box;
    padding: 2px 2px 0;
  }
  .pbtn {
    height: 16px;
    background: #fff;
    border: 1px solid #c0c0c0;
    box-sizing: border-box;
    display: flex;
    align-items: center;
    justify-content: center;
  }
  .pbtn svg { width: 7px; height: 4px; }
  .pthumb {
    height: 145px;
    background: #fff;
    border: 1px solid #b8b8b8;
    box-sizing: border-box;
  }
  .pbtn-end {
    position: absolute;
    left: 2px;
    right: 2px;
    bottom: -8px;
  }

  /* dialog */
  .dialog {
    position: absolute;
    left: 505px;
    top: 268px;
    width: 569px;
    height: 797px;
    box-sizing: border-box;
    border: 1px solid #106ebe;
    border-top: 0;
    background: #f0f0f0;
    box-shadow: 0 0 10px rgba(0, 0, 0, .45);
    display: flex;
    flex-direction: column;
    z-index: 5;
  }
  .dlg-title {
    height: 36px;
    flex: none;
    margin: 0 -1px;
    background: #106ebe;
    color: #fff;
    text-align: center;
    line-height: 36px;
    font-size: 10.5px;
    position: relative;
  }
  .dlg-drop { position: absolute; left: 64px; top: 17px; width: 7px; height: 4px; }
  .dlg-close { position: absolute; right: 17px; top: 12px; width: 12px; height: 12px; }
  :global(.dlg-logo) {
    position: absolute;
    left: 11px;
    top: 10px;
    width: 46px;
    height: 46px;
    z-index: 2;
  }
  .dlg-ribbon { height: 121px; flex: none; border-bottom: 1px solid #d4d4d4; box-sizing: content-box; }
  .dlg-tabrow {
    height: 30px;
    padding: 4px 0 0 78px;
    box-sizing: border-box;
  }
  .dlg-tab {
    display: inline-block;
    font-size: 13.5px;
    line-height: 20px;
    height: 25px;
    box-sizing: border-box;
    border-bottom: 3px solid #106ebe;
  }
  .dlg-groups { display: flex; }
  .dgroup {
    height: 87px;
    box-sizing: border-box;
    border-right: 1px solid #d6d6d6;
    display: flex;
    flex-direction: column;
  }
  .ditems { display: flex; height: 72px; flex: none; }
  .ditem {
    flex: none;
    display: flex;
    flex-direction: column;
    align-items: center;
    text-align: center;
    line-height: 13px;
    white-space: nowrap;
    padding-top: 6px;
    box-sizing: border-box;
  }
  .ditem svg { width: 29px; height: 29px; margin-bottom: 3px; }

  .dlg-content {
    flex: 1;
    min-height: 0;
    background: #f7f7f7;
    border-bottom: 2px solid #b8b8b8;
    padding: 0 4px;
    box-sizing: border-box;
  }
  .dlg-tabs {
    display: flex;
    height: 21px;
    align-items: flex-end;
    border-bottom: 1px solid #b8b8b8;
    box-sizing: content-box;
    margin: 0 -4px;
    padding-left: 6px;
  }
  .dtab {
    height: 19px;
    line-height: 17px;
    box-sizing: border-box;
    background: #f0f0f0;
    border: 1px solid #d4d4d4;
    border-bottom: 0;
    padding: 0 3px;
    margin-right: 1px;
    color: #444;
  }
  .dtab:nth-child(5) { padding: 0 4px; }
  .dtab:nth-child(6) { padding: 0 5px; }
  .dtab.on {
    height: 22px;
    margin-bottom: -1px;
    background: #f7f7f7;
    border-color: #b8b8b8;
    padding: 0 5px;
    line-height: 18px;
  }
  .dlg-box {
    margin-top: 3px;
    border: 1px solid #d4d4d4;
    height: 577px;
    box-sizing: border-box;
  }
  .box-head {
    height: 21px;
    background: #e6e6e6;
    border-bottom: 1px solid #d4d4d4;
    box-sizing: border-box;
    font-weight: 700;
    font-size: 11px;
    line-height: 20px;
    padding-left: 11px;
    color: #555;
  }
  .frow {
    height: 26px;
    display: flex;
    align-items: center;
    padding-left: 6px;
    white-space: nowrap;
  }
  .frow label {
    width: 210px;
    flex: none;
  }
  .frow label.low { position: relative; top: 2px; }
  .field {
    height: 20px;
    background: #fff;
    border: 1px solid #a8a8a8;
    box-sizing: border-box;
    display: flex;
    align-items: center;
    position: relative;
    flex: none;
  }
  .color { width: 99px; padding-left: 5px; gap: 4px; }
  .swatch {
    display: block;
    width: 22px;
    height: 10px;
    border: 1px solid #444;
    box-sizing: border-box;
  }
  .num { width: 99px; justify-content: flex-end; padding-right: 18px; color: #444; }
  .wide { width: 207px; padding-left: 3px; }
  :global(.caret) {
    position: absolute;
    right: 4px;
    top: 7px;
    width: 6px;
    height: 4px;
    fill: #777;
  }
  .color :global(.caret) { right: 5px; }
  .spin {
    position: absolute;
    right: 4px;
    top: 2px;
    display: flex;
    flex-direction: column;
    gap: 5px;
  }
  .spin svg { display: block; width: 6px; height: 4px; fill: #888; }
  .check {
    width: 14px;
    height: 14px;
    flex: none;
    background: #fff;
    border: 1px solid #a8a8a8;
    box-sizing: border-box;
    display: block;
  }
  .check svg { display: block; width: 12px; height: 12px; }
  .frow .check { margin-left: 6px; background: none; }
  .after { margin-left: 3px; }
  .pct { margin-left: 7px; }
  .checks { margin-top: 4px; }
  .crow {
    height: 25px;
    display: flex;
    align-items: center;
    padding-left: 6px;
    white-space: nowrap;
  }
  .crow label:first-child { width: 210px; flex: none; }
  .crow .second { width: 239px; flex: none; margin-left: 38px; }
  .dlg-foot { height: 24px; flex: none; background: #f0f0f0; }

  .highlight {
    position: absolute;
    left: 505px;
    top: 525px;
    width: 338px;
    height: 28px;
    box-sizing: border-box;
    border: 5px solid #f79a1e;
    box-shadow: 0 2px 4px rgba(0, 0, 0, .35), inset 0 2px 3px rgba(0, 0, 0, .3);
    z-index: 6;
  }
</style>
